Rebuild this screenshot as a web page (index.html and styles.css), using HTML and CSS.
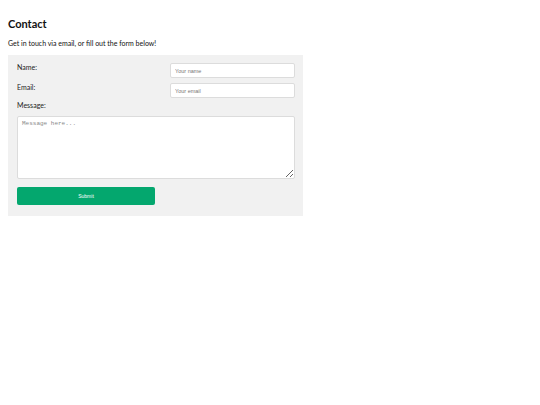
FILE: index.html
```html
<!DOCTYPE html>
<html lang="en">
<head>
    <meta charset="UTF-8">
    <meta name="viewport" content="width=device-width, initial-scale=1.0">
    <title>Contact</title>
    <link rel="stylesheet" href="styles.css">
</head>
<body>
    <h1 class="title">Contact</h1>
    <p class="intro">Get in touch via email, or fill out the form below!</p>
    <form class="contact-form">
        <div class="form-row">
            <label for="name">Name:</label>
            <input type="text" id="name" placeholder="Your name">
        </div>
        <div class="form-row">
            <label for="email">Email:</label>
            <input type="email" id="email" placeholder="Your email">
        </div>
        <label for="message" class="message-label">Message:</label>
        <textarea id="message" placeholder="Message here..."></textarea>
        <button type="submit" class="submit-button">Submit</button>
    </form>
</body>
</html>
```

FILE: styles.css
```css
* {
    box-sizing: border-box;
}

body {
    margin: 0;
    padding: 8px;
    font-family: 'Lato', 'Noto Sans', sans-serif;
    color: #111;
    background: white;
}

.title {
    margin: 9px 0 0;
    font-size: 11px;
    line-height: 13px;
    font-weight: 700;
}

.intro {
    margin: 9px 0 0;
    font-size: 7px;
    line-height: 9px;
}

.contact-form {
    width: 295px;
    margin-top: 7px;
    padding: 8px 8px 11px 9px;
    background: #f1f1f1;
    display: flex;
    flex-direction: column;
}

.form-row {
    display: flex;
    justify-content: space-between;
    align-items: flex-start;
    margin-bottom: 5px;
}

.form-row + .form-row {
    margin-bottom: 3px;
}

.form-row label {
    font-size: 7px;
    line-height: 9px;
    color: #222;
}

.form-row input {
    width: 125px;
    height: 15px;
    padding: 0 4px;
    border: 1px solid #dcdcdc;
    border-radius: 2px;
    background: white;
    font-family: 'Liberation Sans', Arial, sans-serif;
    font-size: 5.5px;
    outline: none;
}

.form-row input::placeholder {
    color: #777;
}

.message-label {
    font-size: 7px;
    line-height: 9px;
    color: #222;
}

textarea {
    margin-top: 6px;
    width: 278px;
    height: 63px;
    padding: 3px 4px;
    border: 1px solid #dcdcdc;
    border-radius: 2px;
    background: white;
    font-family: 'Liberation Mono', monospace;
    font-size: 6px;
    outline: none;
}

textarea::placeholder {
    color: #888;
}

.submit-button {
    margin-top: 8px;
    width: 138px;
    height: 18px;
    border: none;
    border-radius: 2px;
    background: #04a76e;
    color: white;
    font-family: 'Liberation Sans', Arial, sans-serif;
    font-size: 5px;
    cursor: pointer;
}
```
